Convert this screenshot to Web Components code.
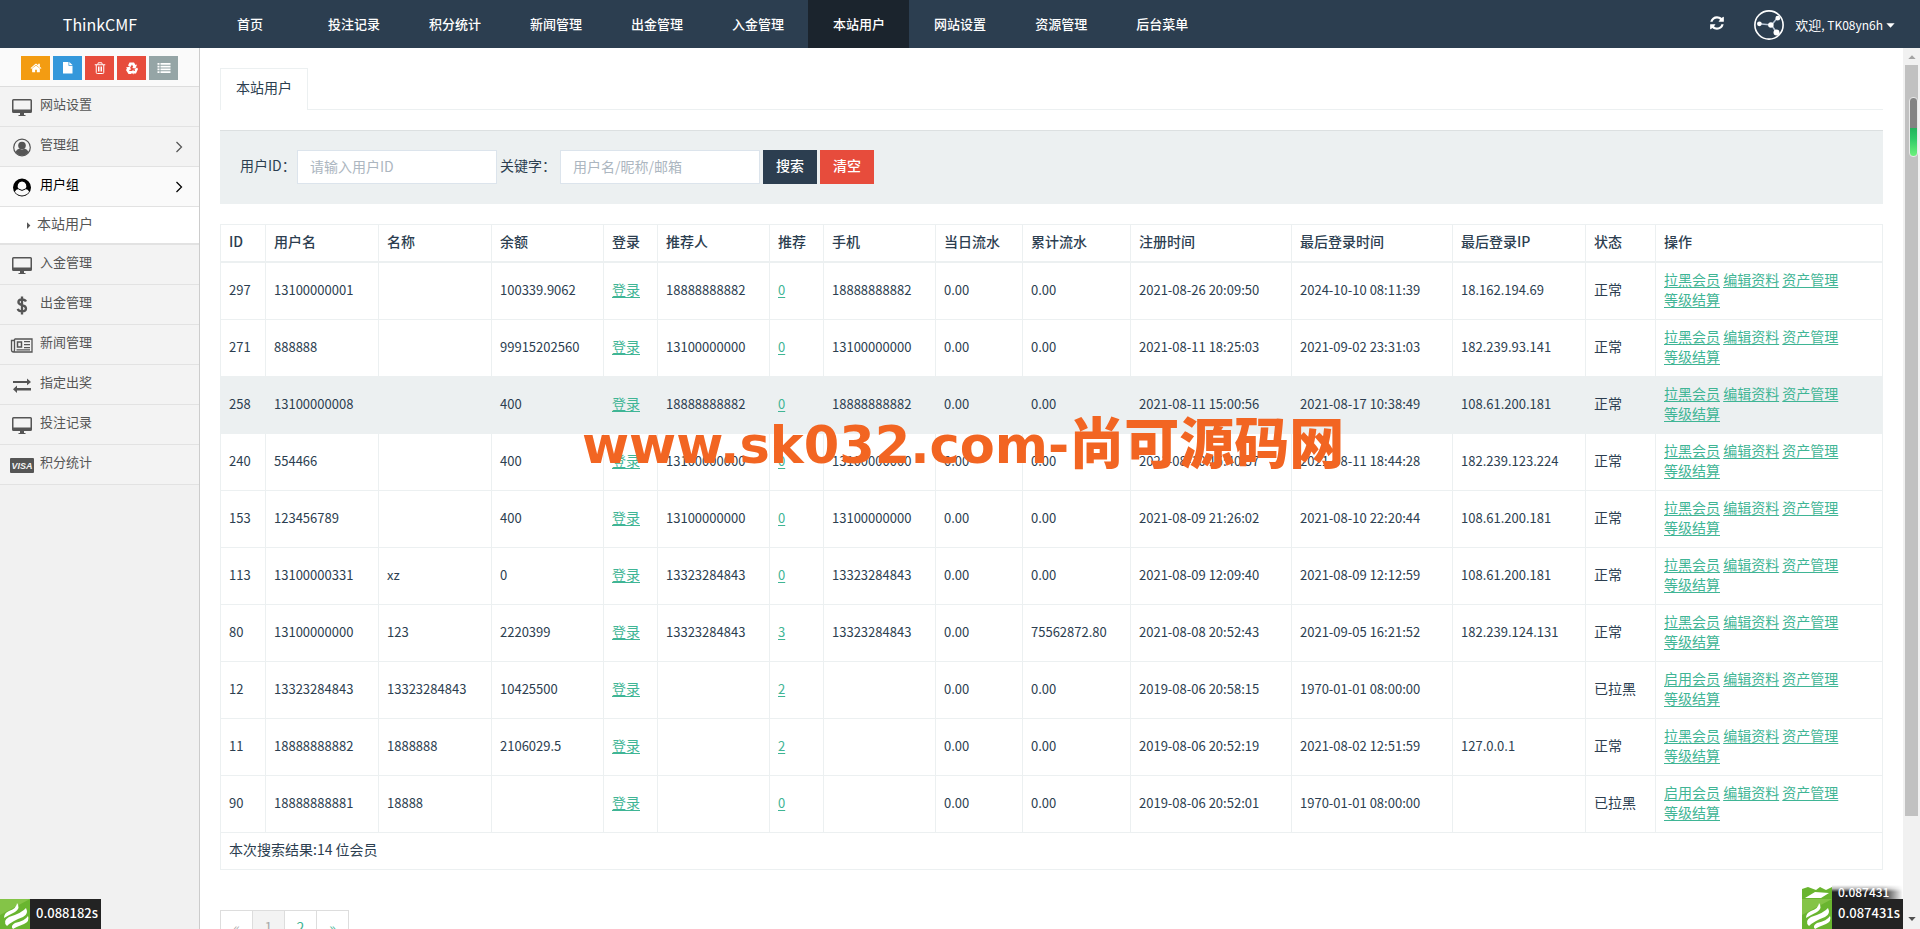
<!DOCTYPE html>
<html lang="zh-CN">
<head>
<meta charset="utf-8">
<title>ThinkCMF</title>
<style>
html,body{margin:0;height:100%;overflow:hidden;background:#fff}
body{font-family:"Noto Sans CJK SC",sans-serif;font-size:14px;line-height:20px;color:#2c3e50}
</style>
</head>
<body>
<cmf-app></cmf-app>
<script>
const ICONS = {
  home:'<path d="M1472 992v480q0 26-19 45t-45 19h-384v-384h-256v384h-384q-26 0-45-19t-19-45v-480q0-1 .5-3t.5-3l575-474 575 474q1 2 1 6zm223-69l-62 74q-8 9-21 11h-3q-13 0-21-7l-692-577-692 577q-12 8-24 7-13-2-21-11l-62-74q-8-10-7-23.5t11-21.5l719-599q32-26 76-26t76 26l244 204v-195q0-14 9-23t23-9h192q14 0 23 9t9 23v408l219 182q10 8 11 21.5t-7 23.5z" transform="scale(.013393)"/>',
  file:'<path d="M2 0h11v7.500h8V23H2zM14.500 0L21 6h-6.500z"/>',
  trash:'<path fill="none" stroke="currentColor" stroke-width="2" d="M4.500 6v15q0 2 2 2h11q2 0 2-2V6M1.500 5.500h21M7.500 5l1-3.500h7l1 3.500M9 9v10M12 9v10M15 9v10"/>',
  recycle:'<path d="M7 1h9l3 5 3-1-3 8-7-1 2.500-2-2.500-5-3 5-5-3zM0 11l8-2 2 7-2-1-2 3h5v6H5l-5-8 2-3zM24 14l-4 9h-5v2l-5-5 5-5v3h3l-1-3 5-4z"/>',
  list:'<path d="M-1 2h4v3.500h-4zM5 2h20v3.500H5zM-1 7.500h4V11h-4zM5 7.500h20V11H5zM-1 13h4v3.500h-4zM5 13h20v3.500H5zM-1 18.500h4V22h-4zM5 18.500h20V22H5z"/>',
  refresh:'<path d="M1639 1056q0 5-1 7-64 268-268 434.500t-478 166.500q-146 0-282.500-55t-243.500-157l-129 129q-19 19-45 19t-45-19-19-45v-448q0-26 19-45t45-19h448q26 0 45 19t19 45-19 45l-137 137q71 66 161 102t187 36q134 0 250-65t186-179q11-17 53-117 8-23 30-23h192q13 0 22.500 9.500t9.500 22.500zm25-800v448q0 26-19 45t-45 19h-448q-26 0-45-19t-19-45 19-45l138-138q-148-137-349-137-134 0-250 65t-186 179q-11 17-53 117-8 23-30 23h-199q-13 0-22.500-9.500t-9.500-22.500v-7q65-268 270-434.500t480-166.500q146 0 284 55.500t245 156.500l130-129q19-19 45-19t45 19 19 45z" transform="scale(.013393)"/>',
  desktop:'<path fill-rule="evenodd" d="M3.500 4h17q1.500 0 1.500 1.500v11q0 1.500-1.500 1.500H14v2h1.500v1h-7v-1H10v-2H3.500Q2 18 2 16.500v-11Q2 4 3.500 4zM3.500 5.500v9h17v-9z"/>',
  admin:'<circle cx="12" cy="12.500" r="8.300" fill="none" stroke="currentColor" stroke-width="1.200"/><circle cx="12" cy="10.500" r="3.800"/><path d="M5.500 17q1-3 4-3.500 2.500 1.800 5 0 3 .5 4 3.500-2.500 3.600-6.500 3.600T5.500 17z"/>',
  user:'<path fill-rule="evenodd" d="M12 3.500a9 9 0 1 0 0 18 9 9 0 0 0 0-18zM12 6.500a4.500 4.500 0 0 1 3.200 7.500q3 0 4 2.700-2.800 3.800-7.200 3.800t-7.200-3.800q1-2.700 4-2.700A4.500 4.500 0 0 1 12 6.500z"/><path d="M8.500 14q3.500 2.800 7 0" fill="none" stroke="currentColor" stroke-width="1"/>',
  dollar:'<path d="M12 3.500v18M16 8.500q-1-2.200-4-2.200-3.600 0-3.600 2.800 0 2.200 3.600 3 4 .8 4 3.400 0 2.900-4 2.900-3.400 0-4.300-2.500" fill="none" stroke="currentColor" stroke-width="2.300"/>',
  news:'<path d="M4.500 6H22v13H3.500q-2 0-2-2V7.500h3V17q0 1.300-1 1.300M4.500 6v11" fill="none" stroke="currentColor" stroke-width="1.300"/><path d="M7.500 9h4v5h-4z" fill="none" stroke="currentColor" stroke-width="1.500"/><path d="M14 8h6v1.300h-6zM14 11h6v1.300h-6zM14 14h6v1.300h-6zM6.500 16.300H20v1.200H6.500z"/>',
  exchange:'<path d="M3 8h14V5.500L21 9l-4 3.300V10H3zM21 15H7v-2.500L3 16.300 7 20v-2.500h14z"/>',
  visa:'<rect x="0" y="5" width="24" height="15" rx="1"/><text x="12" y="16" font-family="Liberation Sans" font-size="9" font-weight="700" font-style="italic" text-anchor="middle" fill="#f3f3f3">VISA</text>',
  right:'<path d="M9 6l6 6-6 6" fill="none" stroke="currentColor" stroke-width="1.500"/>',
  caret:'<path d="M8 3l9 9-9 9z"/>',
  down:'<path d="M1 6h22L12 18z"/>',
  up:'<path d="M1 18h22L12 7z"/>',
  share:'<circle cx="12" cy="12" r="11.300" fill="none" stroke="currentColor" stroke-width="1.300"/><path d="M4 11l10 1 5-6M14 12l4 6" fill="none" stroke="#b9c6d6" stroke-width="1.200"/><circle cx="4.300" cy="11" r="1.900"/><circle cx="13.500" cy="12" r="2.200"/><circle cx="19" cy="6.500" r="1.900"/><circle cx="18" cy="18" r="2.400"/>'
};

/* Shared base: renders the subclass's markup into an open shadow root. */
class Base extends HTMLElement {
  connectedCallback() {
    if (this.shadowRoot) return;
    const t = document.createElement('template');
    t.innerHTML = this.view();
    this.attachShadow({mode:'open'}).append(t.content.cloneNode(true));
  }
}

class CmfIcon extends Base {
  view() {
    return `<style>:host{display:inline-flex;width:var(--size,24px);height:var(--size,24px);flex:none}svg{width:100%;height:100%;fill:currentColor;overflow:visible}</style>
    <svg viewBox="0 0 24 24" aria-hidden="true">${ICONS[this.getAttribute('name')]}</svg>`;
  }
}

class CmfHeader extends Base {
  view() {
    const items = ['投注记录','积分统计','新闻管理','出金管理','入金管理','本站用户','网站设置','资源管理','后台菜单'];
    return `<style>
    :host{display:flex;flex:none;height:48px;background:#2c3e50;color:#fff;font-size:13px;font-weight:500}
    a{color:inherit;text-decoration:none}
    .brand{width:200px;font-size:16px;line-height:48px;text-align:center;font-weight:400}
    nav{display:flex;flex:1;padding-left:12px}
    nav a{line-height:47px;padding:0 24px 0 25px}
    nav a.first{margin-right:16px}
    nav a.on{background:#1b242d}
    .tools{display:flex;align-items:center;padding-right:29px}
    button{all:unset;display:flex;--size:16px;margin-right:29px;padding-bottom:2px}
    .me{display:flex;align-items:center;--size:30px;font-size:12px;font-weight:400;padding-top:2px}
    .me span{margin:0 3px 0 11px}
    .me b{font-size:13px;font-weight:400}
    .me .c{--size:9px}
    .tools{padding-right:25px}
    </style>
    <a class="brand" href="#">ThinkCMF</a>
    <nav><a class="first" href="#">首页</a>${items.map(t=>`<a href="#"${t==='本站用户'?' class="on"':''}>${t}</a>`).join('')}</nav>
    <div class="tools"><button aria-label="刷新"><cmf-icon name="refresh"></cmf-icon></button>
    <a class="me" href="#"><cmf-icon name="share"></cmf-icon><span><b>欢迎</b>, TK08yn6h</span><cmf-icon class="c" name="down"></cmf-icon></a></div>`;
  }
}

class CmfMenuItem extends Base {
  view() {
    return `<style>
    :host{display:block;border-bottom:1px solid #e2e2e2;background:#f3f3f3;color:#555;font-size:13px}
    :host([active]){background:#fafafa;color:#000}
    :host([sub]){background:#fff;font-size:14px;border-bottom:2px solid #e2e2e2}
    a{display:flex;align-items:center;height:39px;box-sizing:border-box;padding:0 10px;color:inherit;text-decoration:none}
    :host([sub]) a{height:36px;padding-left:24px}
    span{flex:1;padding:0 0 5px 6px}
    :host([sub]) span{padding:0 0 4px 4px}
    .r{--size:20px}.s{--size:9px}
    </style>
    <a href="#">${this.hasAttribute('sub')?'<cmf-icon class="s" name="caret"></cmf-icon>':`<cmf-icon name="${this.getAttribute('icon')}"></cmf-icon>`}<span><slot></slot></span>${this.hasAttribute('more')?'<cmf-icon class="r" name="right"></cmf-icon>':''}</a>`;
  }
}

class CmfSidebar extends Base {
  view() {
    const b = [['home','#f39c12','首页'],['file','#3498db','文件'],['trash','#e74c3c','删除'],['recycle','#e74c3c','回收'],['list','#95a5a6','列表']];
    return `<style>
    :host{display:block;flex:none;width:200px;box-sizing:border-box;border-right:1px solid #ccc;background:#f1f1f1}
    .bar{display:flex;gap:3px;padding:8px 21px 6px;background:#fafafa;border-bottom:1px solid #ddd}
    button{all:unset;display:flex;flex:1;height:24px;align-items:center;justify-content:center;color:#fff;--size:12px}
    </style>
    <div class="bar">${b.map(([n,c,l])=>`<button aria-label="${l}" style="background:${c}"><cmf-icon name="${n}"></cmf-icon></button>`).join('')}</div>
    <nav>
    <cmf-menu-item icon="desktop">网站设置</cmf-menu-item>
    <cmf-menu-item icon="admin" more>管理组</cmf-menu-item>
    <cmf-menu-item icon="user" more active>用户组</cmf-menu-item>
    <cmf-menu-item sub>本站用户</cmf-menu-item>
    <cmf-menu-item icon="desktop">入金管理</cmf-menu-item>
    <cmf-menu-item icon="dollar">出金管理</cmf-menu-item>
    <cmf-menu-item icon="news">新闻管理</cmf-menu-item>
    <cmf-menu-item icon="exchange">指定出奖</cmf-menu-item>
    <cmf-menu-item icon="desktop">投注记录</cmf-menu-item>
    <cmf-menu-item icon="visa">积分统计</cmf-menu-item>
    </nav>`;
  }
}

class CmfTabs extends Base {
  view() {
    return `<style>
    :host{display:flex;border-bottom:1px solid #ecf0f1}
    a{color:inherit;text-decoration:none;background:#fff;border:1px solid #ecf0f1;border-bottom:0;padding:8px 15px 13px;margin-bottom:-1px}
    </style><a href="#"><slot></slot></a>`;
  }
}

class CmfSearch extends Base {
  view() {
    return `<style>
    :host{display:block;background:#ecf0f1;border-top:1px solid #dce0e1;padding:19px 20px 20px;margin:20px 0}
    form{display:flex;align-items:center}
    label{width:57px;padding-bottom:5px;white-space:nowrap}
    label+input+label{width:60px}
    input{font:inherit;width:200px;height:34px;box-sizing:border-box;border:1px solid #dce4ec;border-radius:0;padding:0 12px 2px;margin-right:3px;outline:0;color:inherit;background:#fff}
    input::placeholder{color:#acb6c0;opacity:1}
    button{font:inherit;font-weight:500;height:34px;width:54px;padding:0 0 4px;border:0;color:#fff;background:#2c3e50;margin-right:3px}
    button.red{background:#e74c3c}
    </style>
    <form><label for="uid">用户ID：</label><input id="uid" placeholder="请输入用户ID"><label for="kw">关键字：</label><input id="kw" placeholder="用户名/昵称/邮箱"><button type="button">搜索</button><button type="button" class="red">清空</button></form>`;
  }
}

class CmfUserTable extends Base {
  view() {
    const cols = [['ID',45],['用户名',113],['名称',113],['余额',112],['登录',54],['推荐人',112],['推荐',54],['手机',112],['当日流水',87],['累计流水',108],['注册时间',161],['最后登录时间',161],['最后登录IP',133],['状态',70],['操作',0]];
    const a='18888888882', b='13100000000', c='13323284843';
    const rows = [
      ['297','13100000001','','100339.9062',a,'0',a,'0.00','2021-08-26 20:09:50','2024-10-10 08:11:39','18.162.194.69',1],
      ['271','888888','','99915202560',b,'0',b,'0.00','2021-08-11 18:25:03','2021-09-02 23:31:03','182.239.93.141',1],
      ['258','13100000008','','400',a,'0',a,'0.00','2021-08-11 15:00:56','2021-08-17 10:38:49','108.61.200.181',1],
      ['240','554466','','400',b,'0',b,'0.00','2021-08-10 15:40:57','2021-08-11 18:44:28','182.239.123.224',1],
      ['153','123456789','','400',b,'0',b,'0.00','2021-08-09 21:26:02','2021-08-10 22:20:44','108.61.200.181',1],
      ['113','13100000331','xz','0',c,'0',c,'0.00','2021-08-09 12:09:40','2021-08-09 12:12:59','108.61.200.181',1],
      ['80','13100000000','123','2220399',c,'3',c,'75562872.80','2021-08-08 20:52:43','2021-09-05 16:21:52','182.239.124.131',1],
      ['12','13323284843','13323284843','10425500','','2','','0.00','2019-08-06 20:58:15','1970-01-01 08:00:00','',0],
      ['11','18888888882','1888888','2106029.5','','2','','0.00','2019-08-06 20:52:19','2021-08-02 12:51:59','127.0.0.1',1],
      ['90','18888888881','18888','','','0','','0.00','2019-08-06 20:52:01','1970-01-01 08:00:00','',0]
    ];
    const link = t => `<a href="#">${t}</a>`;
    const row = (r) => {
      const [id,user,name,bal,ref,n,tel,sum,reg,last,ip,ok] = r;
      const nums = [id,user,name,bal,null,ref,link(n),tel,'0.00',sum,reg,last,ip];
      return `<tr${id==='258'?' class="hover"':''}>${nums.map(v=>v===null?`<td>${link('登录')}</td>`:`<td class="n">${v}</td>`).join('')}<td>${ok?'正常':'已拉黑'}</td><td>${[ok?'拉黑会员':'启用会员','编辑资料','资产管理','等级结算'].map(link).join(' ')}</td></tr>`;
    };
    return `<style>
    :host{display:block}
    table{width:100%;table-layout:fixed;border-collapse:collapse}
    th,td{border:1px solid #ecf0f1;padding:6px 8px 10px;text-align:left;vertical-align:middle;font-weight:400}
    th{font-weight:500;border-bottom-width:2px;white-space:nowrap}
    .n{font-size:13px;padding:7px 8px 9px}
    td:last-child{padding-right:36px}
    .hover{background:#ecf0f1}
    a{color:#3fb595;text-decoration:underline;text-underline-offset:2px}
    </style>
    <table><colgroup>${cols.map(x=>`<col${x[1]?` style="width:${x[1]}px"`:''}>`).join('')}</colgroup>
    <thead><tr>${cols.map(x=>`<th>${x[0]}</th>`).join('')}</tr></thead>
    <tbody>${rows.map(row).join('')}</tbody>
    <tfoot><tr><td colspan="15">本次搜索结果:14 位会员</td></tr></tfoot></table>`;
  }
}

class CmfPager extends Base {
  view() {
    return `<style>
    :host{display:flex;margin-top:40px}
    a{width:31px;height:32px;line-height:32px;text-align:center;border:1px solid #ddd;border-right:0;color:#3fb595;text-decoration:none}
    a:last-child{border-right:1px solid #ddd}
    .off{color:#aaa}.on{background:#f3f3f3}
    </style><a class="off" href="#">«</a><a class="off on" href="#">1</a><a href="#">2</a><a href="#">»</a>`;
  }
}

class CmfScrollbar extends Base {
  view() {
    return `<style>
    :host{display:flex;flex-direction:column;flex:none;width:17px;background:#f1f1f1;position:relative;align-items:center;color:#a3a3a3;--size:8px}
    .e{height:17px;display:flex;align-items:center}
    .t{flex:1;width:100%;display:flex;justify-content:center}
    .t i{width:13px;height:89%;background:#c1c1c1}
    .d{color:#505050;height:20px}
    .pill{position:absolute;right:2px;top:49px;width:7px;height:58px;border:1px solid #e8e8e8;border-radius:4px;background:linear-gradient(#838383 52%,#22b35c 52%,#2fc968 70%,#6df27c)}
    </style><div class="e"><cmf-icon name="up"></cmf-icon></div><div class="t"><i></i></div><div class="e d"><cmf-icon name="down"></cmf-icon></div><div class="pill"></div>`;
  }
}

class CmfTrace extends Base {
  view() {
    const ghost = this.hasAttribute('ghost');
    return `<style>
    :host{display:block;position:absolute;bottom:0;z-index:2}
    .row{display:flex;height:30px;font-size:13px;font-weight:500;color:#fff}
    svg{width:30px;height:30px;flex:none;background:#69b52f}
    .row span{width:71px;box-sizing:border-box;padding:4px 0 0 6px;background:#232323}
    .ghost{height:14px;display:flex}
    .ghost svg{height:14px}
    .ghost b{width:71px;box-sizing:border-box;height:14px;padding-left:6px;line-height:14px;font-size:12px;font-weight:500;color:#fff;background:linear-gradient(90deg,transparent 50px,#fff),linear-gradient(#fff,#bbb 25%,#232323 50%)}
    </style>
    ${ghost?'<div class="ghost"><svg viewBox="0 0 30 14"><path fill="#fff" d="M0 0h30v2l-6 3-6-3-4 3-8-3-6 2zM3 13l10-6 14 1-8 5z"/></svg><b>0.087431</b></div>':''}
    <div class="row"><svg viewBox="0 0 30 30"><path fill="#84c447" d="M0 0h30L0 16z"/><path fill="#fff" d="M17 4q4 5-2 9-6 3-11 6 0-5 5-7 8-3 8-8zM26 9q3 6-3 9-11 4-16 9-5-5 2-9 13-4 17-9zM28 17q2 5-4 8-8 3-11 5-3-3 2-6 10-2 13-7z"/></svg><span><slot></slot></span></div>`;
  }
}

class CmfWatermark extends Base {
  view() {
    return `<style>
    :host{display:block;position:absolute;left:582px;top:403px;white-space:nowrap;pointer-events:none;z-index:3;color:#f26522;font:700 51px/72px "DejaVu Sans",sans-serif}
    span{font-family:"Noto Sans CJK SC",sans-serif;font-size:55px;font-weight:900}
    </style>www.sk032.com-<span>尚可源码网</span>`;
  }
}

class CmfApp extends Base {
  view() {
    return `<style>
    :host{display:flex;flex-direction:column;height:100vh;position:relative;overflow:hidden}
    .body{display:flex;flex:1;min-height:0}
    main{flex:1;min-width:0;overflow:hidden;padding:20px 20px 0}
    .left{left:0}.right{right:17px}
    </style>
    <cmf-header></cmf-header>
    <div class="body"><cmf-sidebar></cmf-sidebar>
    <main><cmf-tabs>本站用户</cmf-tabs><cmf-search></cmf-search><cmf-user-table></cmf-user-table><cmf-pager></cmf-pager></main>
    <cmf-scrollbar></cmf-scrollbar></div>
    <cmf-trace class="left">0.088182s</cmf-trace><cmf-trace class="right" ghost>0.087431s</cmf-trace>
    <cmf-watermark></cmf-watermark>`;
  }
}

[['cmf-icon',CmfIcon],['cmf-header',CmfHeader],['cmf-menu-item',CmfMenuItem],['cmf-sidebar',CmfSidebar],['cmf-tabs',CmfTabs],['cmf-search',CmfSearch],['cmf-user-table',CmfUserTable],['cmf-pager',CmfPager],['cmf-scrollbar',CmfScrollbar],['cmf-trace',CmfTrace],['cmf-watermark',CmfWatermark],['cmf-app',CmfApp]].forEach(([n,c])=>customElements.define(n,c));
</script>
</body>
</html>
